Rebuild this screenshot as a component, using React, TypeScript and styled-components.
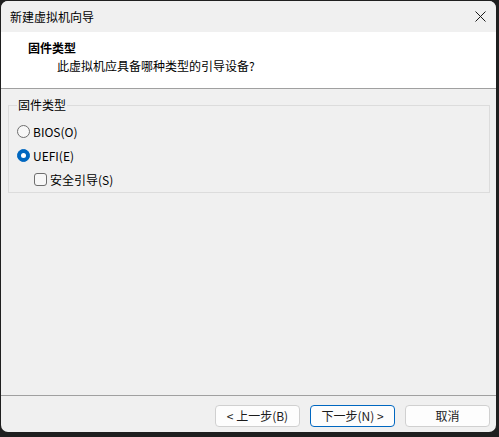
import React from "react";
import styled, { createGlobalStyle } from "styled-components";

const GlobalStyle = createGlobalStyle`
  html, body {
    margin: 0;
    padding: 0;
    background: #1f1f1f;
  }
  body {
    font-family: "Noto Sans CJK SC", "Noto Sans", sans-serif;
    font-size: 12px;
    color: #1a1a1a;
  }
`;

const Screen = styled.div`
  padding: 1px 0 0 1px;
  width: 499px;
  height: 437px;
  box-sizing: border-box;
`;

const Window = styled.div`
  width: 495px;
  height: 431px;
  background: #f0f0f0;
  border-radius: 7px;
  overflow: hidden;
  display: flex;
  flex-direction: column;
`;

const TitleBar = styled.div`
  height: 31px;
  flex: none;
  display: flex;
  align-items: center;
  justify-content: space-between;
  padding: 0 7px 0 9px;
  background: #f0f0f0;
`;

const TitleText = styled.span`
  font-size: 12px;
  line-height: 16px;
  color: #000;
`;

const CloseButton = styled.div`
  width: 14px;
  height: 14px;
  display: flex;
  align-items: center;
  justify-content: center;
  margin-right: 2px;
`;

const Header = styled.div`
  height: 56px;
  flex: none;
  background: #fff;
  display: flex;
  flex-direction: column;
  gap: 2px;
  padding-top: 8px;
  box-sizing: border-box;
`;

const HeaderTitle = styled.div`
  padding-left: 27px;
  font-size: 12px;
  font-weight: 700;
  line-height: 16px;
  color: #000;
`;

const HeaderSub = styled.div`
  padding-left: 56px;
  font-size: 12px;
  line-height: 16px;
  color: #000;
`;

const Divider = styled.div`
  height: 1px;
  flex: none;
  background: #a0a0a0;
`;

const Body = styled.div`
  flex: 1;
  padding: 8px 6px 0 7px;
`;

const GroupBox = styled.fieldset`
  margin: 0;
  padding: 0 0 3px 8px;
  border: 1px solid #dcdcdc;
  display: flex;
  flex-direction: column;
  gap: 4px;
  min-width: 0;
`;

const Legend = styled.legend`
  padding: 0 1px;
  font-size: 12px;
  line-height: 16px;
  color: #000;
  margin-bottom: 8px;
`;

const OptionRow = styled.label<{ $indent?: number }>`
  display: flex;
  align-items: center;
  height: 20px;
  gap: 3px;
  padding-left: ${(p) => p.$indent ?? 0}px;
  font-size: 12px;
  color: #000;
`;

const Radio = styled.span<{ $checked?: boolean }>`
  width: 13px;
  height: 13px;
  box-sizing: border-box;
  border-radius: 50%;
  flex: none;
  display: flex;
  align-items: center;
  justify-content: center;
  background: ${(p) => (p.$checked ? "#0067c0" : "#f7f7f7")};
  border: 1px solid ${(p) => (p.$checked ? "#0067c0" : "#6e6e6e")};

  &::after {
    content: "";
    display: ${(p) => (p.$checked ? "block" : "none")};
    width: 5px;
    height: 5px;
    border-radius: 50%;
    background: #fff;
  }
`;

const CheckBox = styled.span`
  width: 13px;
  height: 13px;
  box-sizing: border-box;
  flex: none;
  border: 1px solid #6e6e6e;
  border-radius: 3px;
  background: #f7f7f7;
`;

const Footer = styled.div`
  height: 36px;
  flex: none;
  display: flex;
  justify-content: flex-end;
  align-items: flex-start;
  gap: 10px;
  padding: 9px 6px 0 0;
  box-sizing: border-box;
`;

const Button = styled.button<{ $primary?: boolean }>`
  width: 85px;
  height: 22px;
  padding: 0;
  box-sizing: border-box;
  border-radius: 4px;
  border: 1px solid ${(p) => (p.$primary ? "#0067c0" : "#d0d0d0")};
  background: #fdfdfd;
  font-family: inherit;
  font-size: 12px;
  line-height: 20px;
  color: #1b1b1b;
`;

const CloseIcon = () => (
  <svg width="11" height="11" viewBox="0 0 11 11">
    <path d="M0.5 0.5 L10.5 10.5 M10.5 0.5 L0.5 10.5" stroke="#1a1a1a" strokeWidth="1" fill="none" />
  </svg>
);

export default function App() {
  return (
    <>
      <GlobalStyle />
      <Screen>
        <Window>
          <TitleBar>
            <TitleText>新建虚拟机向导</TitleText>
            <CloseButton>
              <CloseIcon />
            </CloseButton>
          </TitleBar>
          <Header>
            <HeaderTitle>固件类型</HeaderTitle>
            <HeaderSub>此虚拟机应具备哪种类型的引导设备?</HeaderSub>
          </Header>
          <Divider />
          <Body>
            <GroupBox>
              <Legend>固件类型</Legend>
              <OptionRow>
                <Radio />
                BIOS(O)
              </OptionRow>
              <OptionRow>
                <Radio $checked />
                UEFI(E)
              </OptionRow>
              <OptionRow $indent={17}>
                <CheckBox />
                安全引导(S)
              </OptionRow>
            </GroupBox>
          </Body>
          <Divider />
          <Footer>
            <Button>&lt; 上一步(B)</Button>
            <Button $primary>下一步(N) &gt;</Button>
            <Button>取消</Button>
          </Footer>
        </Window>
      </Screen>
    </>
  );
}
